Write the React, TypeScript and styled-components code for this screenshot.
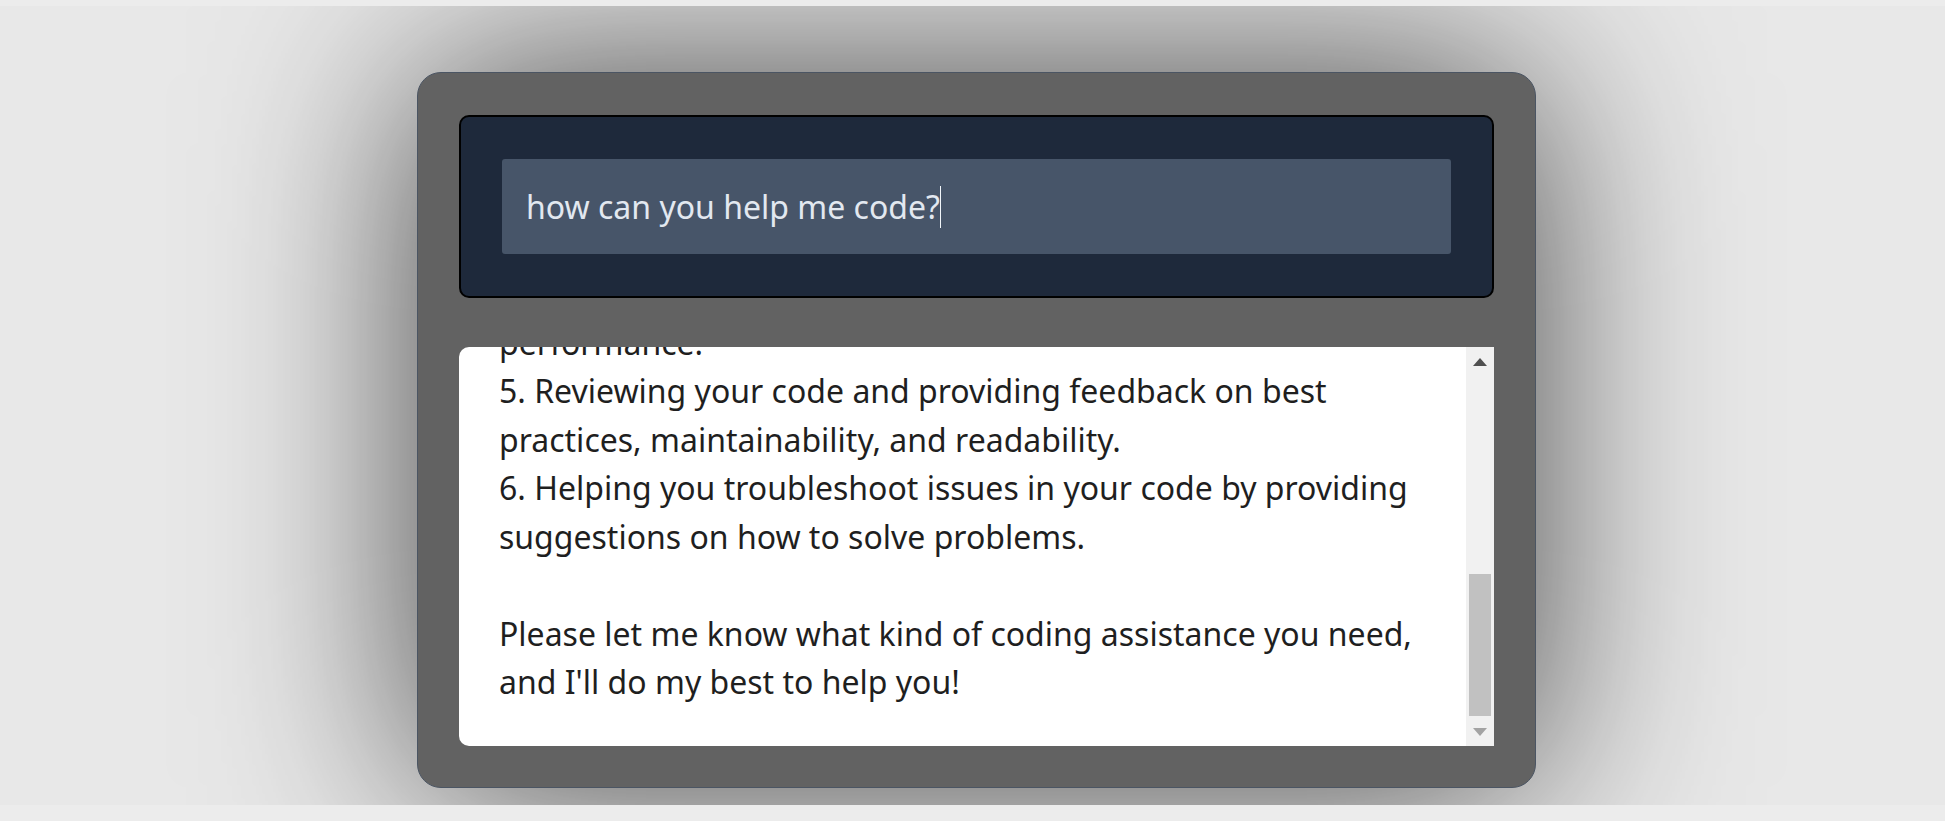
import React, { useLayoutEffect, useRef, useState } from "react";
import styled, { createGlobalStyle } from "styled-components";

const GlobalStyle = createGlobalStyle`
  body {
    margin: 0;
    background: #ececec;
    font-family: "Noto Sans", "Open Sans", sans-serif;
  }
`;

const reply = `
As an AI language model, I can assist you with coding in various ways, such as:

1. Answering questions about programming languages, concepts, and syntax.
2. Providing code examples and snippets to help you understand how to implement specific features.
3. Debugging your code and identifying errors.
4. Suggesting ways to optimize your code for better performance.
5. Reviewing your code and providing feedback on best practices, maintainability, and readability.
6. Helping you troubleshoot issues in your code by providing suggestions on how to solve problems.

Please let me know what kind of coding assistance you need, and I'll do my best to help you!`;

const Page = styled.div`
  margin-top: 6px;
  height: 799px;
  background: #e8e8e8;
  overflow: hidden;
  display: flex;
  justify-content: center;
  align-items: flex-start;
  padding: 66px 0 0 8px;
  box-sizing: border-box;
`;

const Card = styled.div`
  width: 1119px;
  box-sizing: border-box;
  background: #626262;
  border: 1px solid #4b5563;
  border-radius: 24px;
  padding: 42px 41px 41px;
  display: flex;
  flex-direction: column;
  gap: 49px;
  box-shadow: 0 0 210px rgba(0, 0, 0, 0.7);
`;

const PromptPanel = styled.div`
  background: #1e293b;
  border: 2px solid #000;
  border-radius: 10px;
  padding: 42px 41px;
`;

const PromptInput = styled.div`
  height: 95px;
  box-sizing: border-box;
  background: #475569;
  border-radius: 3px;
  padding-left: 24px;
  display: flex;
  align-items: center;
  font-size: 32px;
  color: #e2e8f0;
`;

const Caret = styled.span`
  width: 1.5px;
  height: 42px;
  background: #f1f5f9;
`;

const Answer = styled.div`
  height: 399px;
  display: flex;
  background: #fff;
  border-radius: 10px 0 0 10px;
  overflow: hidden;
`;

const AnswerText = styled.div`
  flex: 1;
  overflow: hidden;
  box-sizing: border-box;
  padding: 40px;
  font-size: 32px;
  line-height: 48.4px;
  color: #1f1f1f;
  white-space: pre-wrap;
`;

const ScrollBar = styled.div`
  width: 28px;
  flex-shrink: 0;
  background: #f1f1f1;
  display: flex;
  flex-direction: column;
`;

const ArrowButton = styled.div<{ $dir: "up" | "down" }>`
  height: 28px;
  display: flex;
  align-items: center;
  justify-content: center;

  &::before {
    content: "";
    border-left: 7px solid transparent;
    border-right: 7px solid transparent;
    ${(p) =>
      p.$dir === "up"
        ? "border-bottom: 8px solid #505050; margin-top: 2px;"
        : "border-top: 8px solid #a3a3a3;"}
  }
`;

const Track = styled.div`
  flex: 1;
  display: flex;
  flex-direction: column;
  justify-content: flex-end;
  padding: 2px 3px;
`;

const Thumb = styled.div`
  background: #c1c1c1;
`;

export default function App() {
  const textRef = useRef<HTMLDivElement>(null);
  const [thumbHeight, setThumbHeight] = useState(144);

  useLayoutEffect(() => {
    const el = textRef.current;
    if (!el) return;
    el.scrollTop = el.scrollHeight;
    const track = el.clientHeight - 56 - 4;
    setThumbHeight(Math.round((track * el.clientHeight) / el.scrollHeight));
  }, []);

  return (
    <>
      <GlobalStyle />
      <Page>
        <Card>
          <PromptPanel>
            <PromptInput>
              how can you help me code?
              <Caret />
            </PromptInput>
          </PromptPanel>
          <Answer>
            <AnswerText ref={textRef}>{reply}</AnswerText>
            <ScrollBar>
              <ArrowButton $dir="up" />
              <Track>
                <Thumb style={{ height: thumbHeight }} />
              </Track>
              <ArrowButton $dir="down" />
            </ScrollBar>
          </Answer>
        </Card>
      </Page>
    </>
  );
}
